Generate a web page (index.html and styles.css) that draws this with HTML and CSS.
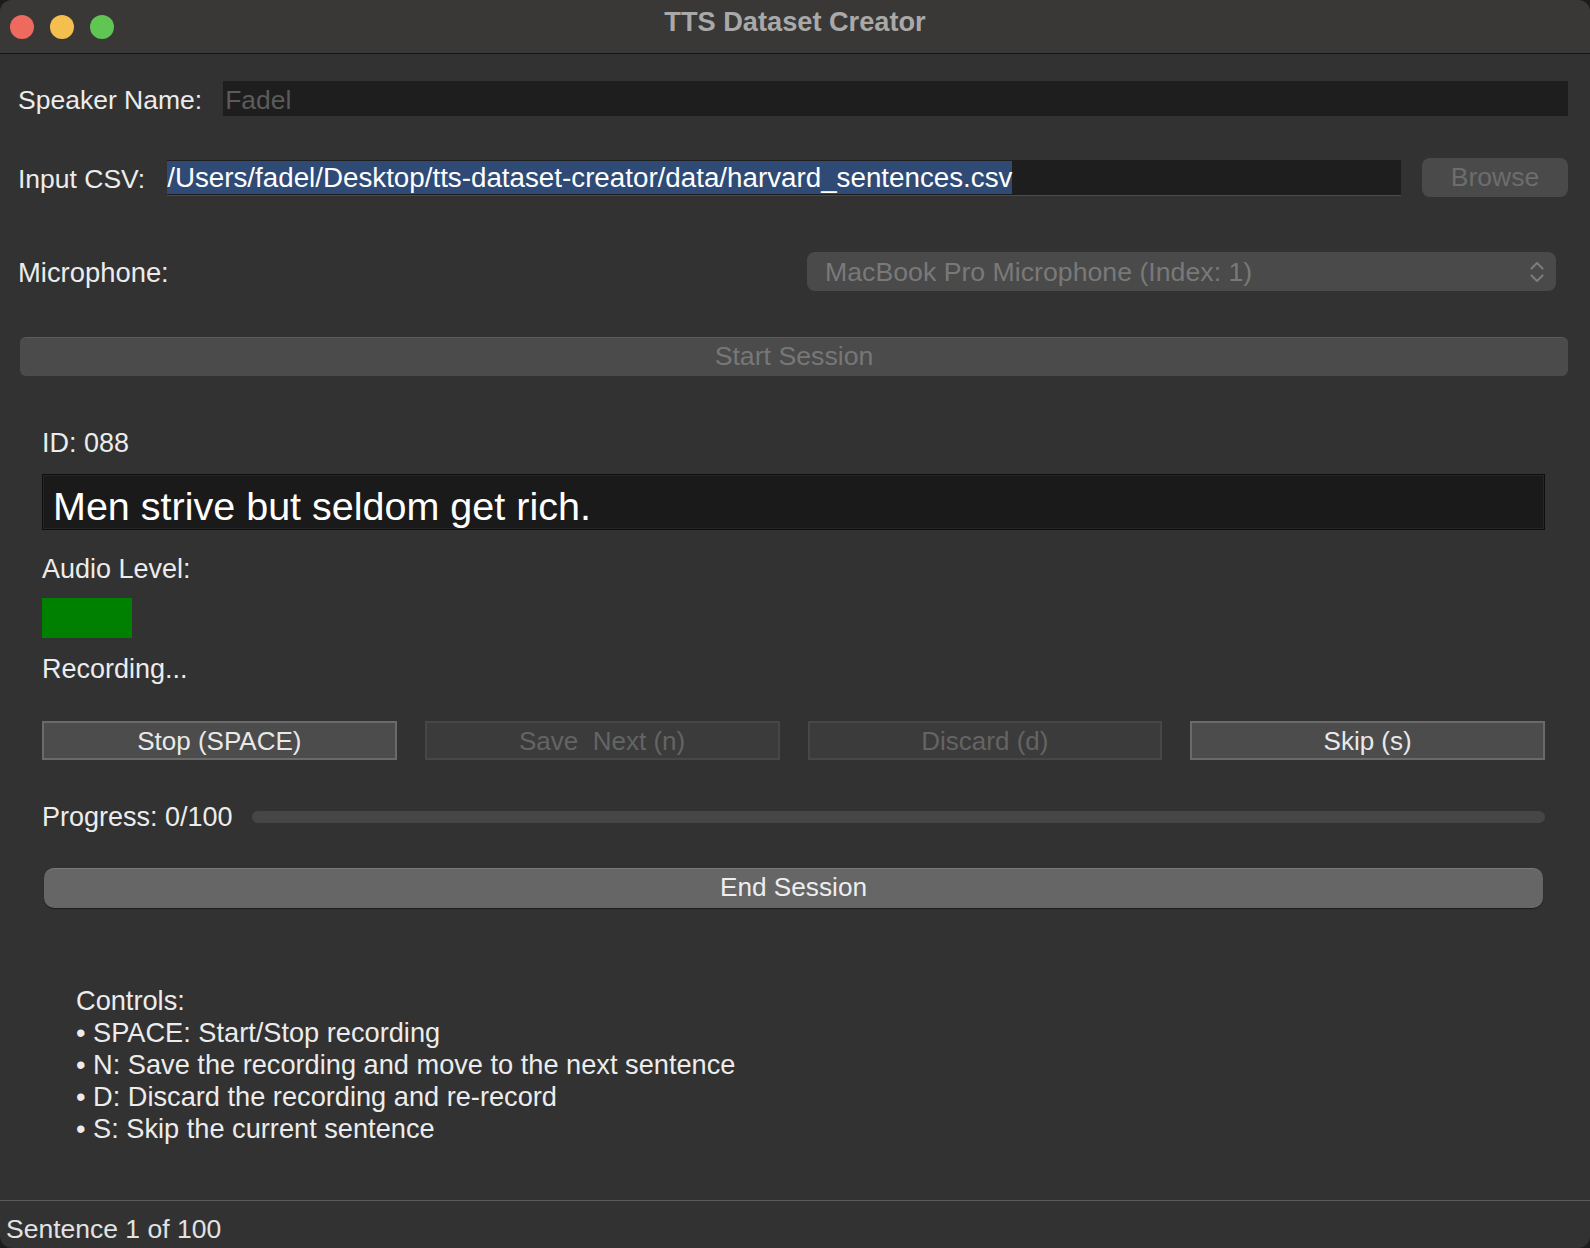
FILE: index.html
```html
<!DOCTYPE html>
<html>
<head>
<meta charset="utf-8">
<link rel="stylesheet" href="styles.css">
</head>
<body>
<div class="window">
  <div class="titlebar">
    <div class="lights">
      <span class="light red"></span>
      <span class="light yellow"></span>
      <span class="light green"></span>
    </div>
    <div class="title">TTS Dataset Creator</div>
  </div>
  <div class="content">
    <div class="row speaker-row">
      <label class="label">Speaker Name:</label>
      <div class="field speaker-field"><span class="placeholder">Fadel</span></div>
    </div>
    <div class="row csv-row">
      <label class="label">Input CSV:</label>
      <div class="field csv-field"><span class="selected">/Users/fadel/Desktop/tts-dataset-creator/data/harvard_sentences.csv</span></div>
      <div class="browse">Browse</div>
    </div>
    <div class="row mic-row">
      <label class="label mic-label">Microphone:</label>
      <div class="combo">
        <span class="combo-text">MacBook Pro Microphone (Index: 1)</span>
        <svg class="chevrons" width="16" height="24" viewBox="0 0 16 24"><path d="M2.5 8.5 L8 3 L13.5 8.5" fill="none" stroke="#7a7a7a" stroke-width="2.2" stroke-linecap="round" stroke-linejoin="round"/><path d="M2.5 15.5 L8 21 L13.5 15.5" fill="none" stroke="#7a7a7a" stroke-width="2.2" stroke-linecap="round" stroke-linejoin="round"/></svg>
      </div>
    </div>
    <div class="start-btn">Start Session</div>

    <div class="panel">
      <div class="text-line id-line">ID: 088</div>
      <div class="sentence">Men strive but seldom get rich.</div>
      <div class="text-line audio-line">Audio Level:</div>
      <div class="level"><div class="level-fill" style="width: 90px"></div></div>
      <div class="text-line rec-line">Recording...</div>
      <div class="buttons">
        <div class="btn active">Stop (SPACE)</div>
        <div class="btn disabled">Save&nbsp;&nbsp;Next (n)</div>
        <div class="btn disabled">Discard (d)</div>
        <div class="btn active">Skip (s)</div>
      </div>
      <div class="progress-row">
        <span class="text-line">Progress: 0/100</span>
        <div class="track"></div>
      </div>
      <div class="end-btn">End Session</div>
    </div>

    <div class="controls">
      <div>Controls:</div>
      <div>• SPACE: Start/Stop recording</div>
      <div>• N: Save the recording and move to the next sentence</div>
      <div>• D: Discard the recording and re-record</div>
      <div>• S: Skip the current sentence</div>
    </div>
  </div>
  <div class="statusbar">Sentence 1 of 100</div>
</div>
</body>
</html>
```
FILE: styles.css
```css
html, body {
  margin: 0;
  padding: 0;
  background: #1c1c1c;
}
body {
  font-family: "Liberation Sans", Arial, sans-serif;
  color: #ececec;
}
.window {
  width: 1590px;
  height: 1248px;
  background: #323232;
  border-radius: 12px;
  overflow: hidden;
  display: flex;
  flex-direction: column;
}
.titlebar {
  height: 53px;
  flex: 0 0 53px;
  background: #393837;
  border-bottom: 1px solid #141414;
  position: relative;
  display: flex;
  align-items: center;
}
.lights {
  display: flex;
  gap: 16px;
  padding-left: 10px;
}
.light {
  width: 24px;
  height: 24px;
  border-radius: 50%;
  display: block;
}
.red { background: #ee6a5f; }
.yellow { background: #f5bf4f; }
.green { background: #61c554; }
.title {
  position: absolute;
  left: 0;
  right: 0;
  top: 6px;
  text-align: center;
  font-weight: bold;
  font-size: 27.2px;
  line-height: 32px;
  color: #a9a9a9;
}
.content {
  flex: 1 1 auto;
  min-height: 0;
  padding: 0 22px 0 18px;
}
.row {
  display: flex;
  align-items: center;
}
.label {
  font-size: 26.5px;
  white-space: nowrap;
  padding-top: 3px;
}
.mic-label {
  font-size: 27.4px;
}
.speaker-row {
  margin-top: 27px;
  height: 35px;
}
.speaker-field {
  margin-left: 21px;
  flex: 1;
  height: 35px;
  background: #1e1e1e;
  display: flex;
  align-items: center;
  padding-left: 2px;
  padding-top: 3px;
  box-sizing: border-box;
}
.placeholder {
  color: #5b5b5b;
  font-size: 26.5px;
}
.csv-row {
  margin-top: 42px;
  height: 39px;
}
.csv-field {
  margin-left: 22px;
  width: 1234px;
  height: 35px;
  background: #1e1e1e;
  border-bottom: 1px solid #4a4a4a;
  display: flex;
  align-items: center;
}
.selected {
  background: #2f4b75;
  color: #ffffff;
  font-size: 27.75px;
  line-height: 33px;
  white-space: nowrap;
}
.browse {
  margin-left: 21px;
  width: 146px;
  height: 39px;
  border-radius: 8px;
  background: #4a4a4a;
  color: #6d6d6d;
  font-size: 26.5px;
  display: flex;
  align-items: center;
  justify-content: center;
}
.mic-row {
  margin-top: 55px;
  height: 39px;
  justify-content: space-between;
}
.combo {
  width: 749px;
  height: 39px;
  margin-right: 12px;
  border-radius: 8px;
  background: #4a4a4a;
  display: flex;
  align-items: center;
  justify-content: space-between;
  padding: 0 11px 0 18px;
  box-sizing: border-box;
}
.combo-text {
  color: #797979;
  font-size: 26.7px;
  padding-top: 2px;
}
.start-btn {
  margin-top: 46px;
  margin-left: 2px;
  height: 39px;
  border-radius: 6px;
  background: #4b4b4b;
  border-top: 1px solid #5b5b5b;
  color: #777777;
  font-size: 26.7px;
  display: flex;
  align-items: center;
  justify-content: center;
  padding-bottom: 2px;
  box-sizing: border-box;
}
.panel {
  padding: 0 23px 0 24px;
}
.text-line {
  font-size: 27px;
  line-height: 32px;
  color: #ececec;
  white-space: nowrap;
}
.id-line {
  margin-top: 51px;
}
.sentence {
  margin-top: 15px;
  background: #1a1a1a;
  border: 1px solid #0e0e0e;
  box-shadow: inset 0 0 0 1px #262626;
  font-size: 39.5px;
  line-height: 54px;
  padding-left: 10px;
  padding-top: 4px;
  box-sizing: content-box;
  height: 50px;
  overflow: hidden;
  color: #ffffff;
}
.audio-line {
  margin-top: 23px;
}
.level {
  margin-top: 13px;
  height: 40px;
}
.level-fill {
  height: 40px;
  background: #008000;
}
.rec-line {
  margin-top: 15px;
}
.buttons {
  margin-top: 36px;
  display: grid;
  grid-template-columns: repeat(4, 1fr);
  column-gap: 28px;
}
.btn {
  height: 39px;
  box-sizing: border-box;
  display: flex;
  align-items: center;
  justify-content: center;
  font-size: 26px;
  white-space: nowrap;
  padding-top: 1px;
}
.btn.active {
  background: #4c4c4c;
  border: 2px solid #6a6a6a;
  color: #e9e9e9;
}
.btn.disabled {
  background: #3b3b3b;
  border: 2px solid #474747;
  color: #646464;
}
.progress-row {
  margin-top: 41px;
  height: 32px;
  display: flex;
  align-items: center;
}
.track {
  flex: 1;
  margin-left: 19px;
  height: 12px;
  border-radius: 6px;
  background: #464646;
}
.end-btn {
  margin-top: 35px;
  margin-left: 2px;
  margin-right: 2px;
  height: 40px;
  border-radius: 10px;
  background: #666666;
  border-top: 1px solid #7a7a7a;
  box-shadow: 0 1px 1px rgba(0,0,0,0.45);
  box-sizing: border-box;
  color: #eeeeee;
  font-size: 26.2px;
  display: flex;
  align-items: center;
  justify-content: center;
  padding-bottom: 2px;
}
.controls {
  margin-top: 77px;
  padding-left: 58px;
  font-size: 27.2px;
  line-height: 32px;
  color: #ececec;
}
.statusbar {
  flex: 0 0 48px;
  height: 48px;
  overflow: hidden;
  border-top: 1px solid #5a5a5a;
  padding-left: 6px;
  padding-top: 8px;
  font-size: 26.5px;
  line-height: 40px;
  box-sizing: border-box;
  color: #e2e2e2;
}
```
